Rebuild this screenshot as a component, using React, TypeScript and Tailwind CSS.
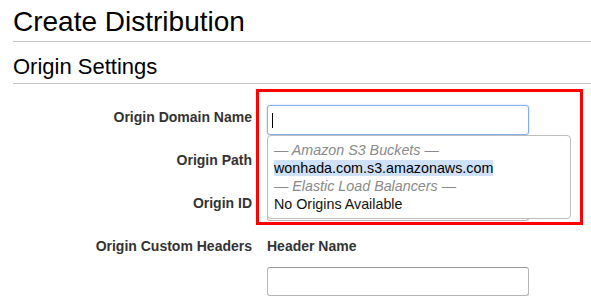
import { ReactNode } from 'react';

const font = { fontFamily: '"Liberation Sans", Arial, sans-serif' };

function Row({ label, children }: { label: string; children?: ReactNode }) {
  return (
    <div className="grid grid-cols-[239px_262px] gap-x-[15px] mb-[13px]">
      <div className="text-right text-[14px] leading-[20px] pt-[2px] font-bold text-[#333]">{label}</div>
      <div>{children}</div>
    </div>
  );
}

function TextBox({ focused = false, children }: { focused?: boolean; children?: ReactNode }) {
  return (
    <div
      className={
        focused
          ? 'relative h-[30px] rounded-[3px] border border-[#85b0ea] shadow-[0_0_2px_rgba(102,150,230,0.5)] bg-white'
          : 'relative h-[30px] rounded-[3px] border border-[#b5b5b5] border-t-[#9a9a9a] bg-white'
      }
    >
      {children}
    </div>
  );
}

export default function App() {
  return (
    <div className="relative w-[591px] h-[308px] overflow-hidden bg-white text-black" style={font}>
      <div className="pl-[13px]">
        <h1 className="pt-[6px] pb-[3px] text-[28px] leading-[32px] font-normal border-b border-[#c4c4c4]">
          Create Distribution
        </h1>
        <h2 className="mt-[12px] pb-[4px] text-[22px] leading-[25px] font-normal border-b border-[#c4c4c4]">
          Origin Settings
        </h2>

        <div className="mt-[21px]">
          <Row label="Origin Domain Name">
            <TextBox focused>
              <span className="absolute left-[4px] top-[7px] w-px h-[15px] bg-black" />
            </TextBox>
          </Row>
          <Row label="Origin Path">
            <TextBox />
          </Row>
          <Row label="Origin ID">
            <TextBox />
          </Row>
          <Row label="Origin Custom Headers">
            <div className="text-[14px] leading-[20px] pt-[2px] font-bold text-[#333]">Header Name</div>
            <div className="mt-[11px] h-[29px] rounded-[3px] border border-[#b5b5b5] border-t-[#999]" />
          </Row>
        </div>
      </div>

      {/* suggestions dropdown */}
      <div className="absolute left-[267px] top-[135px] w-[304px] h-[84px] rounded-[4px] border border-[#bdbdbd] bg-white pl-[6px] pt-[5px] text-[14.3px] leading-[18px]">
        <div className="italic text-[#8a8a8a]">— Amazon S3 Buckets —</div>
        <div>
          <span className="inline-block bg-[#cfe1f8] leading-[16px] my-[1px]">wonhada.com.s3.amazonaws.com</span>
        </div>
        <div className="italic text-[#8a8a8a]">— Elastic Load Balancers —</div>
        <div className="text-[#111]">No Origins Available</div>
      </div>

      {/* annotation */}
      <div className="absolute left-[256px] top-[89px] w-[327px] h-[136px] border-[3px] border-[#ff0000]" />
    </div>
  );
}
